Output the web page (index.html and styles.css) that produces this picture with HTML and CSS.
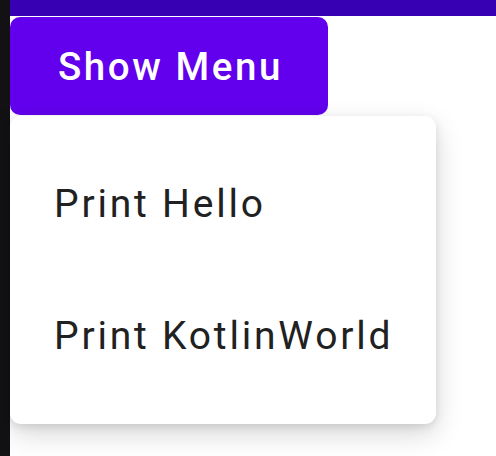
FILE: index.html
```html
<!DOCTYPE html>
<html lang="en">
<head>
    <meta charset="UTF-8">
    <meta name="viewport" content="width=device-width, initial-scale=1.0">
    <title>Popup Menu</title>
    <link rel="stylesheet" href="styles.css">
</head>
<body>
    <div class="screen">
        <div class="edge"></div>
        <div class="content">
            <div class="status-bar"></div>
            <button class="show-button">Show Menu</button>
            <div class="popup-menu">
                <div class="menu-item">Print Hello</div>
                <div class="menu-item">Print KotlinWorld</div>
            </div>
        </div>
    </div>
</body>
</html>
```

FILE: styles.css
```css
/* --- base --- */
body {
    margin: 0;
    font-family: Roboto, 'Noto Sans', sans-serif;
    background: #fff;
    overflow: hidden;
}

.screen {
    display: flex;
    width: 496px;
    height: 456px;
}

.edge {
    width: 10px;
    flex-shrink: 0;
    background-color: #121214;
}

.content {
    flex: 1;
    display: flex;
    flex-direction: column;
    align-items: flex-start;
}

.status-bar {
    align-self: stretch;
    height: 16px;
    background-color: #3700b3;
}

/* --- button --- */
.show-button {
    margin-top: 1px;
    width: 318px;
    height: 98px;
    padding: 1px 0 0 3px;
    border: none;
    border-radius: 10px;
    background-color: #6200ee;
    color: #fff;
    font-family: Roboto, 'Noto Sans', sans-serif;
    font-weight: 500;
    font-size: 38.5px;
    letter-spacing: 2.6px;
    cursor: pointer;
}

/* --- popup --- */
.popup-menu {
    margin-top: 1px;
    width: 426px;
    padding: 22px 0;
    background-color: #fff;
    border-radius: 11px;
    box-shadow: 0 10px 28px rgba(0,0,0,0.16), 0 3px 8px rgba(0,0,0,0.1);
}

.menu-item {
    height: 132px;
    display: flex;
    align-items: center;
    padding: 0 44px;
    font-size: 39px;
    letter-spacing: 2.8px;
    white-space: nowrap;
    color: #212121;
}
```
